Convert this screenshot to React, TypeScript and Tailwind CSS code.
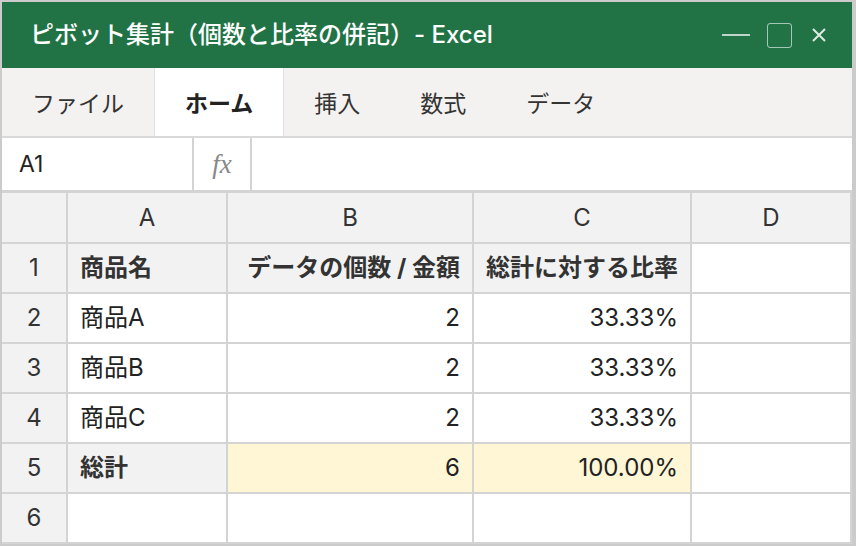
import React from "react";

const font = { fontFamily: 'Inter, "Noto Sans CJK JP", "Noto Sans", sans-serif' };
const jp = { fontFamily: '"Noto Sans CJK JP", "Noto Sans", sans-serif' };

const cols = ["A", "B", "C", "D"];

type Cell = { text?: string; bold?: boolean; right?: boolean; bg?: string };

const rows: Cell[][] = [
  [
    { text: "商品名", bold: true, bg: "bg-[#f2f2f2]" },
    { text: "データの個数 / 金額", bold: true, right: true, bg: "bg-[#f2f2f2]" },
    { text: "総計に対する比率", bold: true, right: true, bg: "bg-[#f2f2f2]" },
    { bg: "bg-white" },
  ],
  [{ text: "商品A" }, { text: "2", right: true }, { text: "33.33%", right: true }, {}],
  [{ text: "商品B" }, { text: "2", right: true }, { text: "33.33%", right: true }, {}],
  [{ text: "商品C" }, { text: "2", right: true }, { text: "33.33%", right: true }, {}],
  [
    { text: "総計", bold: true, bg: "bg-[#f2f2f2]" },
    { text: "6", right: true, bg: "bg-[#fff6d6]" },
    { text: "100.00%", right: true, bg: "bg-[#fff6d6]" },
    {},
  ],
  [{}, {}, {}, {}],
];

const tabs = ["ファイル", "ホーム", "挿入", "数式", "データ"];

export default function App() {
  return (
    <div className="w-[856px] h-[546px] bg-[#cbcbcb] pt-[2px] pl-[2px] pr-[4px] pb-[2px]" style={font}>
      <div className="flex flex-col h-full bg-white">
        {/* title bar */}
        <div className="h-[66px] bg-[#217346] flex items-center pl-[28px] pr-[26px] text-white">
          <span className="text-[24px] font-medium">ピボット集計（個数と比率の併記）- Excel</span>
          <div className="ml-auto flex items-center">
            <div className="w-[28px] h-[2px] bg-white/70"></div>
            <div className="ml-[17px] w-[25px] h-[25px] border-[1.5px] border-white/60 rounded-[3px]"></div>
            <svg className="ml-[20px]" width="14" height="14" viewBox="0 0 14 14">
              <path d="M1 1 L13 13 M13 1 L1 13" stroke="rgba(255,255,255,0.85)" strokeWidth="2" />
            </svg>
          </div>
        </div>

        {/* ribbon tabs */}
        <div className="h-[70px] bg-[#f3f2f1] border-b-2 border-[#d9d9d9] flex" style={jp}>
          {tabs.map((t) => (
            <div
              key={t}
              className={
                t === "ホーム"
                  ? "px-[30px] flex items-center text-[23px] font-bold text-[#222] bg-white border-x border-[#e2e2e2]"
                  : "px-[30px] flex items-center text-[23px] text-[#333]"
              }
            >
              {t}
            </div>
          ))}
        </div>

        {/* formula bar */}
        <div className="h-[55px] border-b-[3px] border-[#d4d4d4] flex">
          <div className="w-[192px] border-r-2 border-[#d4d4d4] flex items-center pl-[17px] text-[23px] text-[#222]">
            A1
          </div>
          <div className="w-[58px] border-r-2 border-[#d4d4d4] flex items-center justify-center">
            <span className="text-[27px] italic text-[#888]" style={{ fontFamily: '"Liberation Serif", serif' }}>
              fx
            </span>
          </div>
          <div className="flex-1"></div>
        </div>

        {/* grid */}
        <div className="grid grid-cols-[66px_160px_246px_218px_160px] text-[24px]">
          <div className="h-[51px] bg-[#f2f2f2] border-r-2 border-b-2 border-[#d4d4d4]"></div>
          {cols.map((c) => (
            <div
              key={c}
              className="h-[51px] bg-[#f2f2f2] border-r-2 border-b-2 border-[#d4d4d4] flex items-center justify-center text-[#333]"
            >
              {c}
            </div>
          ))}
          {rows.map((r, i) => (
            <React.Fragment key={i}>
              <div className="h-[50px] bg-[#f2f2f2] border-r-2 border-b-2 border-[#d4d4d4] flex items-center justify-center text-[#333]">
                {i + 1}
              </div>
              {r.map((cell, j) => (
                <div
                  key={j}
                  className={[
                    "h-[50px] border-r-2 border-b-2 border-[#d4d4d4] flex items-center px-[12px] text-[#222] whitespace-nowrap",
                    cell.bg ?? "bg-white",
                    cell.right ? "justify-end" : "justify-start",
                    cell.bold ? "font-bold text-[#333]" : "",
                  ].join(" ")}
                >
                  {cell.text}
                </div>
              ))}
            </React.Fragment>
          ))}
        </div>
      </div>
    </div>
  );
}
